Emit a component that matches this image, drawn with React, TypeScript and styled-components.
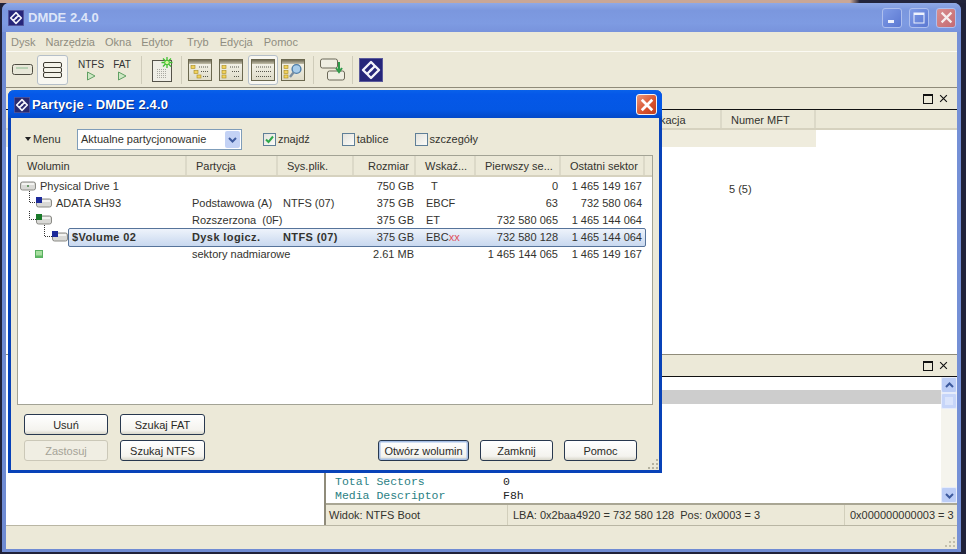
import React from 'react';
import styled, { createGlobalStyle } from 'styled-components';

const GlobalStyle = createGlobalStyle`
  html, body {
    margin: 0;
    height: 100%;
    overflow: hidden;
    background: #20223a;
  }
  * { box-sizing: border-box; }
`;

const Desktop = styled.div`
  width: 966px;
  height: 554px;
  position: relative;
  overflow: hidden;
  padding: 3px 0 0 2px;
  background: linear-gradient(90deg, #c9a796 0 88%, #23253c 89% 100%) top / 100% 3px no-repeat, #20223a;
  font-family: "Liberation Sans", Arial, sans-serif;
  font-size: 11px;
  color: #33332e;
`;

const MainWindow = styled.div`
  width: 959px;
  height: 549px;
  display: flex;
  flex-direction: column;
  background: #ece9d8;
  border-radius: 7px 7px 0 0;
  border-left: 4px solid #6f8bd3;
  border-right: 4px solid #7590d6;
  border-bottom: 3px solid #6f8bd3;
`;

const TitleBar = styled.div`
  height: 29px;
  margin: 0 -4px;
  padding: 0 5px 0 6px;
  flex: none;
  display: flex;
  align-items: center;
  gap: 4px;
  border-radius: 7px 7px 0 0;
  background: linear-gradient(#8fa9e6, #7b97de 25%, #7e9be2 70%, #7893dc);
`;

const TitleText = styled.span`
  font-size: 13px;
  font-weight: bold;
  color: #dde5f8;
  flex: 1;
`;

const CaptionButton = styled.div<{ $close?: boolean }>`
  width: 20px;
  height: 20px;
  margin-left: 3px;
  border: 1px solid #aebfee;
  border-radius: 3px;
  background: ${p => (p.$close ? 'linear-gradient(135deg, #d98f8f, #c46a72)' : 'linear-gradient(135deg, #7f9be6, #5b78d2)')};
  display: flex;
  align-items: center;
  justify-content: center;
`;

const MenuBar = styled.div`
  height: 20px;
  flex: none;
  display: flex;
  align-items: center;
  gap: 10px;
  padding-left: 5px;
  color: #8f8d80;
  border-bottom: 1px solid #fbfaf3;
`;

const MenuEntry = styled.span<{ $extra: number }>`
  margin-right: ${p => p.$extra}px;
`;

const ToolBar = styled.div`
  height: 36px;
  flex: none;
  display: flex;
  align-items: center;
  padding-left: 2px;
  border-bottom: 1px solid #8f8b7a;
`;

const ToolButton = styled.div<{ $w: number; $ml?: number; $active?: boolean }>`
  width: ${p => p.$w}px;
  height: 30px;
  margin-left: ${p => p.$ml ?? 0}px;
  flex: none;
  display: flex;
  flex-direction: column;
  align-items: center;
  justify-content: center;
  font-size: 10px;
  line-height: 12px;
  color: #333;
  border-radius: 3px;
  ${p => p.$active && 'background: #f8f7f1; border: 1px solid #b5bfc9;'}
`;

const ToolSeparator = styled.div<{ $w: number }>`
  width: ${p => p.$w}px;
  height: 28px;
  flex: none;
  position: relative;
  &::after {
    content: '';
    position: absolute;
    left: 50%;
    top: 0;
    bottom: 0;
    border-left: 1px solid #cfccba;
  }
`;

const Workspace = styled.div`
  height: 438px;
  flex: none;
  display: flex;
  flex-direction: column;
  border-bottom: 1px solid #b9b6a4;
`;

const PanelHeader = styled.div`
  height: 22px;
  flex: none;
  display: flex;
  justify-content: flex-end;
  align-items: center;
  gap: 6px;
  padding-right: 9px;
  background: #ece9d8;
  border-bottom: 1px solid #111;
`;

const TopPanel = styled.section`
  height: 267px;
  flex: none;
  display: flex;
  flex-direction: column;
  background: #fff;
  border-bottom: 1px solid #8f8b7a;
`;

const ColumnBar = styled.div`
  height: 20px;
  flex: none;
  display: flex;
  background: #ece9d8;
  border-bottom: 2px solid #d6d2bf;
`;

const ColumnLabel = styled.div<{ $w: number }>`
  width: ${p => p.$w}px;
  flex: none;
  overflow: hidden;
  padding-left: 9px;
  line-height: 20px;
  white-space: nowrap;
  border-right: 2px solid #dcd9c8;
`;

const BandRow = styled.div`
  width: 810px;
  height: 17px;
  flex: none;
  background: #efecdd;
`;

const MftValue = styled.div`
  margin: 36px 0 0 723px;
`;

const LowerRow = styled.div`
  flex: 1;
  min-height: 0;
  display: flex;
`;

const LeftPane = styled.div`
  width: 320px;
  flex: none;
  background: #fff;
  border-right: 2px solid #8f8b7a;
`;

const HexPane = styled.section`
  flex: 1;
  min-width: 0;
  display: flex;
  flex-direction: column;
`;

const HexBody = styled.div`
  flex: 1;
  min-height: 0;
  display: flex;
  background: #fff;
`;

const HexRows = styled.div`
  flex: 1;
  min-width: 0;
  display: flex;
  flex-direction: column;
  padding-top: 13px;
`;

const SelectedLine = styled.div`
  height: 14px;
  flex: none;
  background: #cdcdcd;
`;

const FieldList = styled.div`
  margin-top: auto;
  padding: 0 0 0 9px;
  font-family: "Liberation Mono", "Courier New", monospace;
  font-size: 11.5px;
  line-height: 14px;
`;

const FieldRow = styled.div`
  display: grid;
  grid-template-columns: 168px 1fr;
  color: #222;
  span:first-child { color: #2b8184; }
`;

const ScrollBar = styled.div`
  width: 16px;
  flex: none;
  display: flex;
  flex-direction: column;
  background: #f5f4ed;
`;

const ScrollButton = styled.div<{ $thumb?: boolean; $end?: boolean }>`
  height: 16px;
  margin-top: ${p => (p.$end ? 'auto' : '0')};
  flex: none;
  display: flex;
  align-items: center;
  justify-content: center;
  border: 1px solid #e6ecfb;
  border-radius: 2px;
  background: ${p => (p.$thumb ? '#c6d5f9' : '#bccdf6')};
`;

const PaneStatus = styled.div`
  height: 22px;
  flex: none;
  display: grid;
  grid-template-columns: 182px 337px 1fr;
  align-items: center;
  background: #ece9d8;
  border-top: 2px solid #a9a694;
  font-size: 11px;
  span { padding-left: 3px; white-space: pre; height: 100%; line-height: 20px; border-right: 1px solid #d2cfbc; }
  span:nth-child(2) { padding-left: 5px; }
  span:last-child { border: 0; padding-left: 5px; }
`;

const WindowStatus = styled.div`
  height: 23px;
  flex: none;
  display: flex;
  justify-content: flex-end;
  align-items: flex-end;
  padding: 0 1px 1px 0;
`;

/* partition dialog */
const Dialog = styled.div`
  position: absolute;
  left: 8px;
  top: 90px;
  width: 654px;
  height: 383px;
  display: flex;
  flex-direction: column;
  background: #ece9d8;
  border: 3px solid #0842b8;
  border-top: 0;
  border-radius: 6px 6px 0 0;
`;

const DialogTitle = styled.div`
  height: 28px;
  margin: 0 -3px;
  padding: 1px 5px 0 6px;
  flex: none;
  display: flex;
  align-items: center;
  gap: 2px;
  border-radius: 6px 6px 0 0;
  background: linear-gradient(#0a62ea, #0558e8 15%, #0457e4 70%, #0349c8);
  color: #fff;
  font-size: 13px;
  font-weight: bold;
  letter-spacing: 0.15px;
  text-shadow: 1px 1px 0 #0a2f86;
  span { flex: 1; }
`;

const DialogClose = styled.div`
  width: 21px;
  height: 21px;
  border: 1px solid #f3f3f3;
  border-radius: 3px;
  background: linear-gradient(135deg, #e9967a, #d8512c 60%, #c03d20);
  display: flex;
  align-items: center;
  justify-content: center;
`;

const OptionsRow = styled.div`
  height: 37px;
  flex: none;
  display: flex;
  align-items: center;
  padding: 5px 0 0 14px;
`;

const MenuDrop = styled.div`
  width: 52px;
  flex: none;
  display: flex;
  align-items: center;
  gap: 2px;
  &::before {
    content: '';
    border: 3.5px solid transparent;
    border-top: 4px solid #222;
    border-bottom: 0;
  }
`;

const Combo = styled.div`
  width: 165px;
  height: 21px;
  flex: none;
  display: flex;
  align-items: center;
  justify-content: space-between;
  padding: 0 1px 0 3px;
  background: #fff;
  border: 1px solid #7f9db9;
`;

const ComboArrow = styled.div`
  width: 15px;
  height: 17px;
  display: flex;
  align-items: center;
  justify-content: center;
  border-radius: 2px;
  background: #c3d2f5;
`;

const CheckLabel = styled.label<{ $ml: number }>`
  margin-left: ${p => p.$ml}px;
  flex: none;
  display: flex;
  align-items: center;
  gap: 2px;
`;

const CheckBox = styled.span`
  width: 13px;
  height: 13px;
  border: 1px solid #5f7f97;
  background: linear-gradient(135deg, #e4e3dc, #fbfbf8);
  display: flex;
  align-items: center;
  justify-content: center;
`;

const ListBox = styled.div`
  width: 636px;
  height: 250px;
  margin-left: 6px;
  flex: none;
  background: #fff;
  border: 1px solid #a3a395;
`;

const ListHeader = styled.div`
  height: 21px;
  display: grid;
  grid-template-columns: 169px 91px 76px 62px 60px 85px 84px 7px;
  background: #ece9d8;
  border-bottom: 2px solid #d6d2bf;
`;

const HeaderCell = styled.div<{ $align?: string }>`
  padding: 0 5px 0 9px;
  line-height: 21px;
  white-space: nowrap;
  overflow: hidden;
  text-align: ${p => p.$align ?? 'left'};
  border-right: 2px solid #dcd9c8;
  &:last-child { border: 0; }
`;

const ListRow = styled.div<{ $selected?: boolean }>`
  position: relative;
  height: 17px;
  display: grid;
  grid-template-columns: 169px 91px 76px 62px 60px 85px 84px;
  align-items: center;
  font-weight: ${p => (p.$selected ? 'bold' : 'normal')};
  letter-spacing: ${p => (p.$selected ? '0.4px' : 'normal')};
  ${p => p.$selected && `
    &::before {
      content: '';
      position: absolute;
      left: 50px;
      top: 0;
      width: 576px;
      height: 17px;
      border: 1px solid #56739a;
      border-radius: 2px;
      background: linear-gradient(#eef3fb, #c8d8ef);
    }
  `}
`;

const TreeCell = styled.div`
  position: relative;
  display: flex;
  align-items: center;
  white-space: nowrap;
  svg { flex: none; overflow: visible; }
`;

const TreeLabel = styled.span`
  margin-left: 4px;
`;

const Cell = styled.div<{ $align?: string; $pad?: number }>`
  position: relative;
  white-space: pre;
  text-align: ${p => p.$align ?? 'left'};
  padding: ${p => (p.$align === 'right' ? `0 ${p.$pad ?? 3}px 0 0` : `0 0 0 ${p.$pad ?? 5}px`)};
  ${p => p.$align === 'right' && 'font-weight: normal; letter-spacing: normal;'}
`;

const Bad = styled.span`
  color: #e0505a;
`;

const FlagText = styled.span`
  font-weight: normal;
  letter-spacing: normal;
`;

const DialogFooter = styled.div`
  flex: 1;
  display: flex;
  padding: 9px 22px 9px 13px;
`;

const ButtonGrid = styled.div`
  display: grid;
  grid-template-columns: 84px 85px;
  grid-auto-rows: 21px;
  column-gap: 12px;
  row-gap: 5px;
`;

const ButtonGroup = styled.div`
  margin-left: auto;
  align-self: flex-end;
  display: flex;
  gap: 11px;
`;

const PushButton = styled.button<{ $w?: number; $default?: boolean }>`
  width: ${p => (p.$w ? `${p.$w}px` : 'auto')};
  height: 21px;
  padding: 0;
  font: inherit;
  color: #2a2a26;
  border: 1px solid #28384f;
  border-radius: 3px;
  background: linear-gradient(#fff, #f4f3ee 80%, #d9d7cb);
  ${p => p.$default && 'box-shadow: inset 0 0 0 1.5px #a6bfe6;'}
  &:disabled {
    color: #a5a397;
    border-color: #cbc8b8;
    background: #f0eee3;
  }
`;

const Grip = styled.svg`
  position: absolute;
  right: 0;
  bottom: 0;
`;

/* drawings */
const DmdeLogo = ({ size, bg = '#26267a' }: { size: number; bg?: string }) => (
  <svg width={size} height={size} viewBox="0 0 24 24" style={{ flex: 'none' }}>
    <rect x="0.5" y="0.5" width="23" height="23" fill={bg} stroke="#5a5a9c" />
    <g fill="none" stroke="#f4f4fb" strokeWidth="2.4" strokeLinejoin="round" strokeLinecap="round">
      <path d="M15 7 12 4 4 12l4 4 4.5-4.5" />
      <path d="M9 17l3 3 8-8-4-4-4.5 4.5" />
    </g>
  </svg>
);

const DriveSmall = ({ color }: { color?: string }) => (
  <svg width="16" height="11" viewBox="0 0 16 11">
    <rect x="0.5" y="2" width="15" height="8" rx="2" fill="#d9d9d6" stroke="#8b8b86" />
    <rect x="2" y="3" width="12" height="2" fill="#f3f3f1" />
    {color ? <rect x="0" y="0" width="6" height="6" fill={color} /> : <rect x="7" y="5" width="2" height="2" fill="#6b9a6b" />}
  </svg>
);

const TreeLines = ({ w, x, up }: { w: number; x?: number; up?: number }) => (
  <svg width={w} height="17" viewBox={`0 0 ${w} 17`}>
    {x !== undefined && (
      <path d={`M${x + 0.5} ${-(up ?? 0)}V8.5H${w}`} fill="none" stroke="#333" strokeDasharray="1 1" />
    )}
  </svg>
);

const CloseGlyph = ({ size, color, width = 2 }: { size: number; color: string; width?: number }) => (
  <svg width={size} height={size} viewBox="0 0 12 12">
    <path d="M1.5 1.5l9 9M10.5 1.5l-9 9" stroke={color} strokeWidth={width} fill="none" />
  </svg>
);

const PanelGlyphs = () => (
  <>
    <svg width="10" height="10" viewBox="0 0 10 10">
      <rect x="0.5" y="0.5" width="9" height="9" fill="none" stroke="#111" />
      <rect width="10" height="2" fill="#111" />
    </svg>
    <CloseGlyph size={9} color="#111" width={1.5} />
  </>
);

const Chevron = ({ up }: { up?: boolean }) => (
  <svg width="9" height="7" viewBox="0 0 9 7">
    <path d={up ? 'M1 5l3.5-3.5L8 5' : 'M1 2l3.5 3.5L8 2'} fill="none" stroke="#3d5a9e" strokeWidth="2" />
  </svg>
);

const PlayIcon = () => (
  <svg width="10" height="10" viewBox="0 0 10 10">
    <path d="M1.5 1v8L9 5z" fill="#cfe8c4" stroke="#5f9f62" />
  </svg>
);

const ListIcon = ({ folders, nested, search }: { folders?: boolean; nested?: boolean; search?: boolean }) => (
  <svg width="24" height="22" viewBox="0 0 24 22">
    <defs>
      <linearGradient id="wintop" x1="0" y1="0" x2="0" y2="1">
        <stop offset="0" stopColor="#6e6a55" />
        <stop offset="1" stopColor="#c4c0aa" />
      </linearGradient>
      <linearGradient id="winbody" x1="0" y1="0" x2="0" y2="1">
        <stop offset="0" stopColor="#f7f6ee" />
        <stop offset="1" stopColor="#dedbc8" />
      </linearGradient>
    </defs>
    <rect x="0.5" y="0.5" width="23" height="21" fill="url(#winbody)" stroke="#6b684f" />
    <rect x="1" y="1" width="22" height="4" fill="url(#wintop)" />
    {folders && (
      <g fill="#f1d25c" stroke="#a88b20" strokeWidth="0.6">
        <rect x="3" y="6.5" width="4" height="3" />
        <rect x={nested ? 6 : 3} y="11.5" width="4" height="3" />
        <rect x={nested ? 9 : 3} y="16" width="4" height="3" />
      </g>
    )}
    {!search && (
      <g stroke="#55554a" strokeDasharray="1 1">
        <path d={`M${folders ? 11 : 5} 8H20M${folders ? 13 : 5} 12.5H20M${folders ? 15 : 5} 17.5H20`} />
      </g>
    )}
    {search && (
      <g>
        <circle cx="15.5" cy="10" r="4.4" fill="#a8cdea" stroke="#4f7ea8" strokeWidth="1.4" />
        <path d="M12.5 13.5l-3.5 4.5" stroke="#7a8ea0" strokeWidth="2.4" />
      </g>
    )}
  </svg>
);

const NewSectorIcon = () => (
  <svg width="21" height="25" viewBox="0 0 21 25">
    <rect x="0.5" y="3.5" width="19" height="21" fill="#efeee6" stroke="#55534a" />
    <g fill="#a9a9a2">
      {[0, 1, 2, 3, 4].map(r =>
        [0, 1, 2, 3, 4].map(c => <rect key={`${r}${c}`} x={5 + c * 2} y={12 + r * 2} width="1" height="1" />)
      )}
    </g>
    <g stroke="#3fbf2f" strokeWidth="1.3">
      <path d="M15 0v11M9.5 5.5h11M11 1.5l8 8M19 1.5l-8 8" />
    </g>
    <circle cx="15" cy="5.5" r="2.3" fill="#d8f5a0" stroke="#3fbf2f" />
  </svg>
);

const SwitchIcon = () => (
  <svg width="25" height="23" viewBox="0 0 25 23">
    <rect x="0.5" y="1" width="17" height="9" rx="2" fill="#efeee2" stroke="#6b6858" />
    <rect x="7.5" y="13" width="17" height="9" rx="2" fill="#efeee2" stroke="#6b6858" />
    <path d="M19 4v8M16 10l3 4 3-4" fill="none" stroke="#2f9a4a" strokeWidth="2" />
  </svg>
);

type PartitionRow = {
  indent: number;
  lineX?: number;
  up?: number;
  small?: boolean;
  badge?: string;
  name?: string;
  part?: string;
  fs?: string;
  size: string;
  flags?: React.ReactNode;
  flagPad?: number;
  first: string;
  last: string;
  selected?: boolean;
};

const rows: PartitionRow[] = [
  { indent: 2, name: 'Physical Drive 1', size: '750 GB', flags: 'T', flagPad: 15, first: '0', last: '1 465 149 167' },
  { indent: 18, lineX: 11, up: 3, badge: '#1c2a9a', name: 'ADATA SH93', part: 'Podstawowa (A)', fs: 'NTFS (07)', size: '375 GB', flags: 'EBCF', first: '63', last: '732 580 064' },
  { indent: 18, lineX: 11, badge: '#1a7a2a', part: 'Rozszerzona  (0F)', size: '375 GB', flags: 'ET', first: '732 580 065', last: '1 465 144 064' },
  { indent: 34, lineX: 26, up: 3, badge: '#1c2a9a', name: '$Volume 02', part: 'Dysk logicz.', fs: 'NTFS (07)', size: '375 GB', flags: <>EBC<Bad>xx</Bad></>, first: '732 580 128', last: '1 465 144 064', selected: true },
  { indent: 17, small: true, part: 'sektory nadmiarowe', size: '2.61 MB', first: '1 465 144 065', last: '1 465 149 167' },
];

const menuItems: [string, number][] = [
  ['Dysk', 0],
  ['Narzędzia', 0],
  ['Okna', 0],
  ['Edytor', 4],
  ['Tryb', 1],
  ['Edycja', 1],
  ['Pomoc', 0],
];

const GripDots = () => (
  <Grip width="11" height="11" viewBox="0 0 11 11">
    <g fill="#b5b2a0">
      <rect x="8" y="0" width="2" height="2" />
      <rect x="4" y="4" width="2" height="2" />
      <rect x="8" y="4" width="2" height="2" />
      <rect x="0" y="8" width="2" height="2" />
      <rect x="4" y="8" width="2" height="2" />
      <rect x="8" y="8" width="2" height="2" />
    </g>
  </Grip>
);

export default function App() {
  return (
    <Desktop>
      <GlobalStyle />
      <MainWindow>
        <TitleBar>
          <DmdeLogo size={16} />
          <TitleText>DMDE 2.4.0</TitleText>
          <CaptionButton>
            <svg width="12" height="12" viewBox="0 0 12 12"><rect x="2" y="8" width="6" height="3" fill="#eef2fd" /></svg>
          </CaptionButton>
          <CaptionButton>
            <svg width="12" height="12" viewBox="0 0 12 12"><rect x="1" y="1" width="10" height="10" fill="none" stroke="#eef2fd" /><rect x="1" y="1" width="10" height="2" fill="#eef2fd" /></svg>
          </CaptionButton>
          <CaptionButton $close><CloseGlyph size={13} color="#f6eeee" /></CaptionButton>
        </TitleBar>

        <MenuBar>
          {menuItems.map(([label, extra]) => <MenuEntry key={label} $extra={extra}>{label}</MenuEntry>)}
        </MenuBar>

        <ToolBar>
          <ToolButton $w={29}>
            <svg width="21" height="11" viewBox="0 0 21 11">
              <rect x="0.5" y="0.5" width="20" height="10" rx="2" fill="#e8e7d8" stroke="#4f4d42" />
              <rect x="4" y="3" width="12" height="2" fill="#b9d2b4" />
            </svg>
          </ToolButton>
          <ToolButton $w={31} $active>
            <svg width="19" height="16" viewBox="0 0 19 16">
              <g fill="#f4f3ea" stroke="#3c3a30">
                <rect x="0.5" y="0.5" width="18" height="5" rx="1.5" />
                <rect x="0.5" y="5.5" width="18" height="5" rx="1.5" />
                <rect x="0.5" y="10.5" width="18" height="5" rx="1.5" />
              </g>
            </svg>
          </ToolButton>
          <ToolButton $w={46}>NTFS<PlayIcon /></ToolButton>
          <ToolButton $w={16}>FAT<PlayIcon /></ToolButton>
          <ToolSeparator $w={22} />
          <ToolButton $w={21}><NewSectorIcon /></ToolButton>
          <ToolSeparator $w={15} />
          <ToolButton $w={24}><ListIcon folders nested /></ToolButton>
          <ToolButton $w={24} $ml={7}><ListIcon folders /></ToolButton>
          <ToolButton $w={30} $ml={5} $active><ListIcon /></ToolButton>
          <ToolButton $w={24} $ml={3}><ListIcon folders search /></ToolButton>
          <ToolSeparator $w={15} />
          <ToolButton $w={25}><SwitchIcon /></ToolButton>
          <ToolSeparator $w={14} />
          <ToolButton $w={24}><DmdeLogo size={24} /></ToolButton>
        </ToolBar>

        <Workspace>
          <TopPanel>
            <PanelHeader><PanelGlyphs /></PanelHeader>
            <ColumnBar>
              <ColumnLabel $w={645}> </ColumnLabel>
              <ColumnLabel $w={71}>kacja</ColumnLabel>
              <ColumnLabel $w={94}>Numer MFT</ColumnLabel>
            </ColumnBar>
            <BandRow />
            <MftValue>5 (5)</MftValue>
          </TopPanel>

          <LowerRow>
            <LeftPane />
            <HexPane>
              <PanelHeader><PanelGlyphs /></PanelHeader>
              <HexBody>
                <HexRows>
                  <SelectedLine />
                  <FieldList>
                    <FieldRow><span>Total Sectors</span><span>0</span></FieldRow>
                    <FieldRow><span>Media Descriptor</span><span>F8h</span></FieldRow>
                  </FieldList>
                </HexRows>
                <ScrollBar>
                  <ScrollButton><Chevron up /></ScrollButton>
                  <ScrollButton $thumb>
                    <svg width="8" height="8" viewBox="0 0 8 8"><path d="M0 1h8M0 3h8M0 5h8M0 7h8" stroke="#eef3fe" /></svg>
                  </ScrollButton>
                  <ScrollButton $end><Chevron /></ScrollButton>
                </ScrollBar>
              </HexBody>
              <PaneStatus>
                <span>Widok: NTFS Boot</span>
                <span>LBA: 0x2baa4920 = 732 580 128  Pos: 0x0003 = 3</span>
                <span>0x000000000003 = 3</span>
              </PaneStatus>
            </HexPane>
          </LowerRow>
        </Workspace>

        <WindowStatus>
          <svg width="11" height="11" viewBox="0 0 11 11">
            <g fill="#c2bfac">
              <rect x="8" y="0" width="2" height="2" />
              <rect x="4" y="4" width="2" height="2" />
              <rect x="8" y="4" width="2" height="2" />
              <rect x="0" y="8" width="2" height="2" />
              <rect x="4" y="8" width="2" height="2" />
              <rect x="8" y="8" width="2" height="2" />
            </g>
          </svg>
        </WindowStatus>
      </MainWindow>

      <Dialog>
        <DialogTitle>
          <DmdeLogo size={16} bg="#2a2a6e" />
          <span>Partycje - DMDE 2.4.0</span>
          <DialogClose><CloseGlyph size={14} color="#fff" width={2.4} /></DialogClose>
        </DialogTitle>

        <OptionsRow>
          <MenuDrop>Menu</MenuDrop>
          <Combo>
            Aktualne partycjonowanie
            <ComboArrow><Chevron /></ComboArrow>
          </Combo>
          <CheckLabel $ml={21}>
            <CheckBox>
              <svg width="11" height="11" viewBox="0 0 11 11"><path d="M2 5.5l2.5 2.5L9 2.5" fill="none" stroke="#2fa84a" strokeWidth="2" /></svg>
            </CheckBox>
            znajdź
          </CheckLabel>
          <CheckLabel $ml={32}><CheckBox />tablice</CheckLabel>
          <CheckLabel $ml={26}><CheckBox />szczegóły</CheckLabel>
        </OptionsRow>

        <ListBox>
          <ListHeader>
            <HeaderCell>Wolumin</HeaderCell>
            <HeaderCell>Partycja</HeaderCell>
            <HeaderCell>Sys.plik.</HeaderCell>
            <HeaderCell $align="right">Rozmiar</HeaderCell>
            <HeaderCell>Wskaź...</HeaderCell>
            <HeaderCell>Pierwszy se...</HeaderCell>
            <HeaderCell>Ostatni sektor</HeaderCell>
            <HeaderCell />
          </ListHeader>
          {rows.map((r, i) => (
            <ListRow key={i} $selected={r.selected}>
              <TreeCell>
                <TreeLines w={r.indent} x={r.lineX} up={r.up} />
                {r.small ? (
                  <svg width="8" height="8" viewBox="0 0 8 8">
                    <rect x="0.5" y="0.5" width="7" height="7" fill="#a8dfa0" stroke="#58b060" />
                    <rect x="1" y="5.5" width="6" height="2" fill="#5fb865" />
                  </svg>
                ) : (
                  <DriveSmall color={r.badge} />
                )}
                {r.name && <TreeLabel>{r.name}</TreeLabel>}
              </TreeCell>
              <Cell>{r.part}</Cell>
              <Cell>{r.fs}</Cell>
              <Cell $align="right" $pad={2}>{r.size}</Cell>
              <Cell $pad={r.flagPad ?? 10}><FlagText>{r.flags}</FlagText></Cell>
              <Cell $align="right">{r.first}</Cell>
              <Cell $align="right">{r.last}</Cell>
            </ListRow>
          ))}
        </ListBox>

        <DialogFooter>
          <ButtonGrid>
            <PushButton>Usuń</PushButton>
            <PushButton>Szukaj FAT</PushButton>
            <PushButton disabled>Zastosuj</PushButton>
            <PushButton>Szukaj NTFS</PushButton>
          </ButtonGrid>
          <ButtonGroup>
            <PushButton $w={91} $default>Otwórz wolumin</PushButton>
            <PushButton $w={73}>Zamknij</PushButton>
            <PushButton $w={73}>Pomoc</PushButton>
          </ButtonGroup>
        </DialogFooter>
        <GripDots />
      </Dialog>
    </Desktop>
  );
}
